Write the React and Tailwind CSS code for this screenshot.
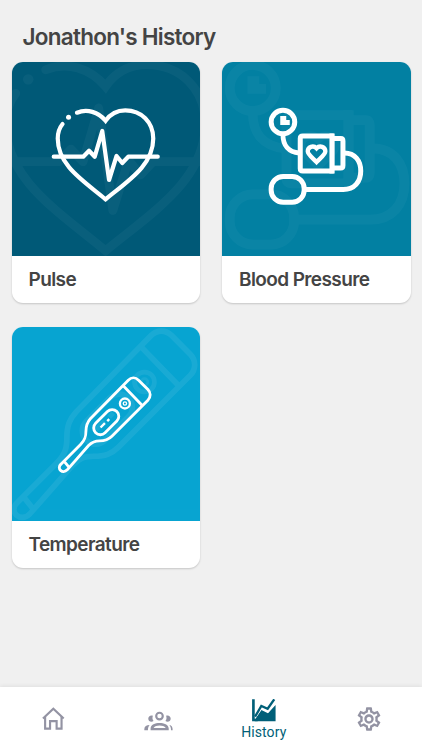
import { MdOutlineSettings } from 'react-icons/md';

const HeartShape = () => (
  <g fill="none" stroke="white" strokeWidth="4.2" strokeLinecap="round" strokeLinejoin="round">
    <path d="M64.7 50.7C75 46.500 86 50 93.300 58.700C98 52 105 48.300 113 48.300C129 48.300 141 60 141 76.500C141 103 117 118 93.300 137.300C70 118 45.500 103 45.500 76.500C45.500 71 47 66 50.300 62" strokeLinejoin="miter" />
    <path d="M41.500 94.700H71L76.800 88.700L82.500 94.700L90 69L96.800 118L104.300 94L110 101L116 94.700H145.500" />
    <circle cx="56.300" cy="55.300" r="2.500" fill="white" stroke="none" />
  </g>
);

const MonitorShape = () => (
  <g fill="none" stroke="white" strokeWidth="5">
    <circle cx="60.700" cy="60" r="11.800" />
    <path d="M58 54H64V58H67.500V63H58Z" fill="white" stroke="none" />
    <path d="M60.700 73C60.700 83 66 90 77 91" strokeWidth="4.800" />
    <path d="M111.500 73.900H80.500Q78 73.900 78 76.400V106.400Q78 108.900 80.500 108.900H111.500" />
    <path d="M109.800 71.400V111.400" strokeWidth="5.200" />
    <path d="M111 76.500H118.500Q120.700 76.500 120.700 79V103.500Q120.700 106 118.500 106H111" />
    <path d="M94.300 86.300C91 82.800 85.500 85 85.500 89.300C85.500 92.800 91 96.500 94.300 100C97.600 96.500 103.100 92.800 103.100 89.300C103.100 85 97.600 82.800 94.300 86.300Z" strokeWidth="4.300" />
    <path d="M122 91C133 91 138.500 99 138.500 109C138.500 120 132 127.500 121 127.500H83" />
    <rect x="48.900" y="114.500" width="33" height="25.800" rx="12" />
  </g>
);

const ThermometerShape = () => (
  <g transform="translate(38 43.500) scale(0.3333)" fill="none" stroke="white" strokeWidth="8.5" strokeLinejoin="round">
    <path d="M32 281L91 222C106 207 107 196 107 183C107 165 111 155 121 144L234 29C243 20 256 20 265 29L293 57C302 66 302 80 293 89L185 197C174 208 164 211 148 211C132 211 125 215 115 225L51 298C37 312 18 294 32 281Z" />
    <path d="M219 46L276 105M43 274L56 290" />
    <rect x="123" y="135" width="90" height="40" rx="20" transform="rotate(-45 168 155)" />
    <circle cx="224" cy="99" r="15" strokeWidth="7" />
    <circle cx="224" cy="99" r="5" strokeWidth="4" />
    <path d="M151 171L164 158M171 152L177 146" strokeWidth="7" />
  </g>
);

const cards = [
  { title: 'Pulse', color: 'bg-[#005a78]', Shape: HeartShape, ghost: 'translate(93.300 23) scale(2.090) translate(-93.300 -58)', ghostOpacity: 0.035 },
  { title: 'Blood Pressure', color: 'bg-[#0380a3]', Shape: MonitorShape, ghost: 'translate(30.500 26) scale(1.950) translate(-60.700 -60)', ghostOpacity: 0.03 },
  { title: 'Temperature', color: 'bg-[#08a4d1]', Shape: ThermometerShape, ghost: 'translate(93.700 97.200) scale(1.990) translate(-93.300 -97.700)', ghostOpacity: 0.07 },
];

const HistoryCard = ({ title, color, Shape, ghost, ghostOpacity }) => (
  <div className="h-[241px] overflow-hidden rounded-[11px] bg-white shadow-[0_1px_2px_rgba(0,0,0,0.18)]">
    <div className={`h-[194px] ${color}`}>
      <svg viewBox="0 0 188 194" className="block h-[194px] w-full">
        <g transform={ghost} opacity={ghostOpacity}>
          <Shape />
        </g>
        <Shape />
      </svg>
    </div>
    <div className="flex h-[47px] items-center pt-[2px] pl-[17px] text-[19px] font-semibold tracking-[-0.6px] text-[#444444]">
      {title}
    </div>
  </div>
);

const HomeIcon = () => (
  <svg viewBox="126 96 68 70" className="h-[23px] w-[23px]" fill="none" stroke="#9393a3" strokeWidth="6.5">
    <path d="M128 131L159.500 101L191 131" />
    <path d="M134.500 126V162H149.500V139H169.500V162H184.500V126" />
  </svg>
);

const PeopleIcon = () => (
  <svg viewBox="432 107 88 60" className="h-5 w-[29px]" fill="#9393a3">
    <circle cx="479" cy="122" r="10" fill="none" stroke="#9393a3" strokeWidth="6.500" />
    <path d="M459 121C451 118 445 124 445 130C445 138 454 142 461 137C457 132 457 126 459 121Z" />
    <path d="M499 121C507 118 513 124 513 130C513 138 504 142 497 137C501 132 501 126 499 121Z" />
    <path fillRule="evenodd" d="M452 165V160C452 148 466 143 479 143S507 148 507 160V165ZM461 158H498C494 153 487 151 479 151S465 153 461 158Z" />
    <path d="M433 165V161C433 153 440 149 449 149C445 154 444 159 444 165ZM509 149C516 150 519 155 519 165H514C514 158 513 154 509 149Z" />
  </svg>
);

const ChartIcon = () => (
  <svg viewBox="123 73 72 68" className="h-[22.500px] w-6" fill="#005f78">
    <path d="M131 140V136L151 106L171 116L194 91V140Z" />
    <path d="M130 132L151 102L171 111L195 82" fill="none" stroke="white" strokeWidth="5" />
    <path d="M132 126L151 94L170 102.500L190 74" fill="none" stroke="#005f78" strokeWidth="7" />
    <path d="M123 74H131V133H140V140H123Z" />
  </svg>
);

export default function App() {
  return (
    <div className="flex h-[750px] w-full flex-col overflow-hidden bg-[#f0f0f0] font-['Inter',sans-serif]">
      <main className="flex-1 px-[11.500px]">
        <h1 className="flex h-[62px] items-end pb-[9px] pl-[11px] text-[22.500px] leading-8 font-semibold tracking-[-0.750px] text-[#444444]">
          Jonathon's History
        </h1>
        <div className="grid grid-cols-[188.500px_188.500px] gap-x-[22px] gap-y-[23.500px]">
          {cards.map((card) => (
            <HistoryCard key={card.title} {...card} />
          ))}
        </div>
      </main>
      <nav className="grid h-[63px] grid-cols-4 bg-white shadow-[0_-1px_4px_rgba(0,0,0,0.07)]">
        <div className="flex justify-center pt-[20px] pl-px"><HomeIcon /></div>
        <div className="flex justify-center pt-[24px]"><PeopleIcon /></div>
        <div className="flex flex-col items-center pt-[12px]">
          <ChartIcon />
          <span className="font-['Roboto',sans-serif] text-[14px] leading-[21px] tracking-[0.1px] text-[#005f78]">History</span>
        </div>
        <div className="flex justify-center pt-[18px]">
          <MdOutlineSettings className="h-7 w-7 text-[#9393a3]" />
        </div>
      </nav>
    </div>
  );
}
